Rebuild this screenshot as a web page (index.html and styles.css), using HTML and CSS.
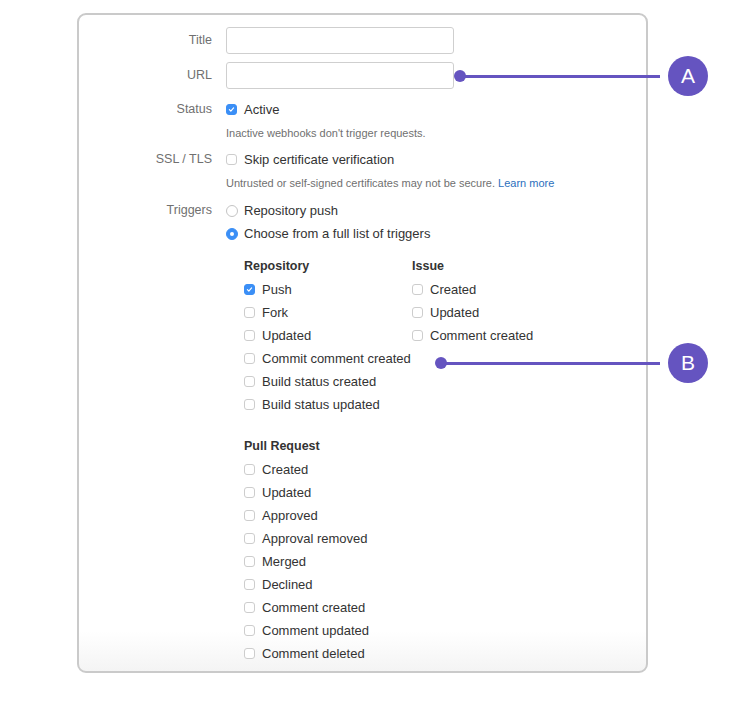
FILE: index.html
```html
<!DOCTYPE html>
<html>
<head>
<meta charset="utf-8">
<link rel="stylesheet" href="styles.css">
</head>
<body>
<div class="stage">
  <div class="panel">
    <div class="row row-input">
      <label class="lbl">Title</label>
      <div class="ctl"><span class="input"></span></div>
    </div>
    <div class="row row-input row-url">
      <label class="lbl">URL</label>
      <div class="ctl"><span class="input"></span></div>
    </div>
    <div class="row row-status">
      <label class="lbl">Status</label>
      <div class="ctl">
        <div class="opt"><span class="cb on"><svg viewBox="0 0 12 12"><path d="M3.2 6.2 5.1 8.1 8.8 3.9" fill="none" stroke="#fff" stroke-width="1.6" stroke-linecap="round" stroke-linejoin="round"/></svg></span>Active</div>
        <div class="help">Inactive webhooks don't trigger requests.</div>
      </div>
    </div>
    <div class="row row-ssl">
      <label class="lbl">SSL / TLS</label>
      <div class="ctl">
        <div class="opt"><span class="cb"></span>Skip certificate verification</div>
        <div class="help">Untrusted or self-signed certificates may not be secure. <a class="link">Learn more</a></div>
      </div>
    </div>
    <div class="row row-trig">
      <label class="lbl">Triggers</label>
      <div class="ctl">
        <div class="opt"><span class="rb"></span>Repository push</div>
        <div class="opt"><span class="rb on"></span>Choose from a full list of triggers</div>
        <div class="groups">
          <div class="group-row">
            <div class="group g-repo">
              <div class="gh">Repository</div>
              <div class="opt"><span class="cb on"><svg viewBox="0 0 12 12"><path d="M3.2 6.2 5.1 8.1 8.8 3.9" fill="none" stroke="#fff" stroke-width="1.6" stroke-linecap="round" stroke-linejoin="round"/></svg></span>Push</div>
              <div class="opt"><span class="cb"></span>Fork</div>
              <div class="opt"><span class="cb"></span>Updated</div>
              <div class="opt"><span class="cb"></span>Commit comment created</div>
              <div class="opt"><span class="cb"></span>Build status created</div>
              <div class="opt"><span class="cb"></span>Build status updated</div>
            </div>
            <div class="group">
              <div class="gh">Issue</div>
              <div class="opt"><span class="cb"></span>Created</div>
              <div class="opt"><span class="cb"></span>Updated</div>
              <div class="opt"><span class="cb"></span>Comment created</div>
            </div>
          </div>
          <div class="group g-pr">
            <div class="gh">Pull Request</div>
            <div class="opt"><span class="cb"></span>Created</div>
            <div class="opt"><span class="cb"></span>Updated</div>
            <div class="opt"><span class="cb"></span>Approved</div>
            <div class="opt"><span class="cb"></span>Approval removed</div>
            <div class="opt"><span class="cb"></span>Merged</div>
            <div class="opt"><span class="cb"></span>Declined</div>
            <div class="opt"><span class="cb"></span>Comment created</div>
            <div class="opt"><span class="cb"></span>Comment updated</div>
            <div class="opt"><span class="cb"></span>Comment deleted</div>
          </div>
        </div>
      </div>
    </div>
  </div>

  <div class="callout callout-a">
    <span class="dot"></span><span class="line"></span><span class="badge">A</span>
  </div>
  <div class="callout callout-b">
    <span class="dot"></span><span class="line"></span><span class="badge">B</span>
  </div>
</div>
</body>
</html>
```

FILE: styles.css
```css
* { box-sizing: border-box; }
html, body { margin: 0; padding: 0; background: #fff; }
body {
  font-family: "Liberation Sans", Arial, Helvetica, sans-serif;
  color: #333;
  width: 735px;
  height: 704px;
  overflow: hidden;
}
.stage { position: relative; width: 735px; height: 704px; padding-top: 13px; }

.panel {
  margin-left: 77px;
  width: 571px;
  height: 660px;
  border: 2px solid #cacaca;
  border-radius: 9px;
  background: linear-gradient(to bottom, #ffffff 0, #ffffff calc(100% - 40px), #f4f4f4 100%);
  padding-top: 12px;
  overflow: hidden;
}

.row {
  display: grid;
  grid-template-columns: 133px 1fr;
  column-gap: 14px;
}
.lbl {
  text-align: right;
  color: #707070;
  font-size: 12.5px;
  line-height: 23px;
}
.row-input .lbl { line-height: 27px; }
.row-url { margin-top: 8px; }
.row-status { margin-top: 9px; }
.row-ssl { margin-top: 6px; }
.row-trig { margin-top: 7px; }

.input {
  display: block;
  width: 228px;
  height: 27px;
  border: 1px solid #cfcfcf;
  border-radius: 3px;
  background: #fff;
}

.opt {
  display: flex;
  align-items: center;
  height: 23px;
  font-size: 13px;
  color: #333;
  white-space: nowrap;
}
.help {
  font-size: 11px;
  color: #707070;
  line-height: 18px;
  margin-top: 3px;
  white-space: nowrap;
}
.link { color: #2c6fbd; }

.cb {
  flex: none;
  width: 11px;
  height: 11px;
  border: 1px solid #cdcdcd;
  border-radius: 3px;
  background: #fff;
  margin-right: 7px;
  display: inline-flex;
  align-items: center;
  justify-content: center;
}
.cb.on { background: #3b8ff6; border-color: #3b8ff6; }
.cb svg { width: 11px; height: 11px; display: block; }

.rb {
  flex: none;
  width: 12px;
  height: 12px;
  border: 1px solid #c4c4c4;
  border-radius: 50%;
  background: #fff;
  margin-right: 6px;
  display: inline-flex;
  align-items: center;
  justify-content: center;
}
.rb.on { background: #3b8ff6; border-color: #3b8ff6; }
.rb.on::after {
  content: "";
  width: 4px;
  height: 4px;
  border-radius: 50%;
  background: #fff;
}

.groups { padding-left: 18px; margin-top: 10px; }
.group-row { display: flex; }
.g-repo { width: 168px; }
.gh {
  font-weight: bold;
  font-size: 12.5px;
  line-height: 23px;
  color: #333;
}
.g-pr { margin-top: 19px; }

.callout {
  position: absolute;
  display: flex;
  align-items: center;
  height: 40px;
}
.callout-a { left: 454px; top: 56px; }
.callout-b { left: 435px; top: 343px; }
.dot {
  width: 12px;
  height: 12px;
  border-radius: 50%;
  background: #6554c0;
  flex: none;
}
.line {
  height: 3px;
  background: #6554c0;
  flex: none;
  margin-left: -2px;
}
.callout-a .line { width: 196px; }
.callout-b .line { width: 215px; }
.badge {
  flex: none;
  width: 40px;
  height: 40px;
  border-radius: 50%;
  background: #6554c0;
  color: #fff;
  font-size: 21px;
  display: flex;
  align-items: center;
  justify-content: center;
  margin-left: 8px;
  font-family: "Liberation Sans", Arial, sans-serif;
}
```
